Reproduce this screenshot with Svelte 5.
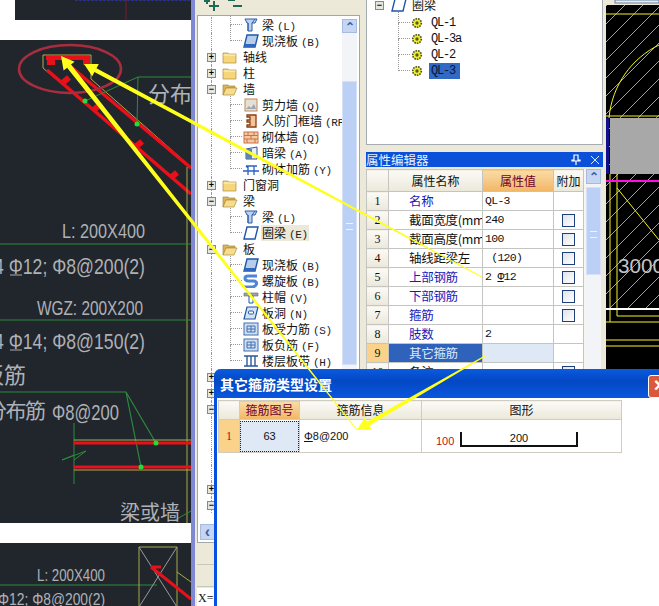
<script lang="ts">
  type Node = { name?: string; key?: string; icon?: string; level: number; exp?: string; sel?: boolean };

  const tree: Node[] = [
    { name: '梁', key: '(L)', icon: 'beam', level: 2 },
    { name: '现浇板', key: '(B)', icon: 'slab', level: 2 },
    { name: '轴线', icon: 'folder', level: 1, exp: '+' },
    { name: '柱', icon: 'folder', level: 1, exp: '+' },
    { name: '墙', icon: 'open', level: 1, exp: '-' },
    { name: '剪力墙', key: '(Q)', icon: 'shear', level: 2 },
    { name: '人防门框墙', key: '(RF)', icon: 'door', level: 2 },
    { name: '砌体墙', key: '(Q)', icon: 'brick', level: 2 },
    { name: '暗梁', key: '(A)', icon: 'hidden', level: 2 },
    { name: '砌体加筋', key: '(Y)', icon: 'rebar', level: 2 },
    { name: '门窗洞', icon: 'folder', level: 1, exp: '+' },
    { name: '梁', icon: 'open', level: 1, exp: '-' },
    { name: '梁', key: '(L)', icon: 'beam', level: 2 },
    { name: '圈梁', key: '(E)', icon: 'ring', level: 2, sel: true },
    { name: '板', icon: 'open', level: 1, exp: '-' },
    { name: '现浇板', key: '(B)', icon: 'slab', level: 2 },
    { name: '螺旋板', key: '(B)', icon: 'spiral', level: 2 },
    { name: '柱帽', key: '(V)', icon: 'cap', level: 2 },
    { name: '板洞', key: '(N)', icon: 'hole', level: 2 },
    { name: '板受力筋', key: '(S)', icon: 'grid', level: 2 },
    { name: '板负筋', key: '(F)', icon: 'grid', level: 2 },
    { name: '楼层板带', key: '(H)', icon: 'band', level: 2 },
    { level: 1, exp: '+' },
    { level: 1, exp: '+' },
    { level: 1, exp: '-' },
    { level: 2 }, { level: 2 }, { level: 2 }, { level: 2 },
    { level: 1, exp: '+' },
    { level: 1, exp: '-' }
  ];

  const members = ['QL-1', 'QL-3a', 'QL-2', 'QL-3'];

  const props = [
    { name: '名称', val: 'QL-3', blue: true },
    { name: '截面宽度(mm', val: '240', box: true },
    { name: '截面高度(mm', val: '100', box: true },
    { name: '轴线距梁左', val: ' (120)', box: true },
    { name: '上部钢筋', val: '2 ', bar: '12', blue: true, box: true },
    { name: '下部钢筋', val: '', blue: true, box: true },
    { name: '箍筋', val: '', blue: true, box: true },
    { name: '肢数', val: '2', blue: true },
    { name: '其它箍筋', val: '', active: true },
    { name: '备注', val: '', box: true }
  ];

  // tapered arrow: wide at the head, thin at the tail
  function arrow(x1: number, y1: number, x2: number, y2: number, w1: number, w2: number) {
    const len = Math.hypot(x2 - x1, y2 - y1);
    const ux = (x2 - x1) / len, uy = (y2 - y1) / len;
    const nx = -uy, ny = ux;
    const hx = x1 + ux * 13, hy = y1 + uy * 13;
    const pts = [
      [x1, y1],
      [hx + nx * 7, hy + ny * 7],
      [hx + nx * w1 / 2, hy + ny * w1 / 2],
      [x2 + nx * w2 / 2, y2 + ny * w2 / 2],
      [x2 - nx * w2 / 2, y2 - ny * w2 / 2],
      [hx - nx * w1 / 2, hy - ny * w1 / 2],
      [hx - nx * 7, hy - ny * 7]
    ];
    return pts.map((p) => p.map((n) => n.toFixed(1)).join(',')).join(' ');
  }

  const arrows = [
    arrow(61, 56, 357, 430, 5, 1),
    arrow(84, 64, 482, 277, 4.5, 1),
    arrow(357, 430, 485, 356, 4.5, 1)
  ];
</script>

{#snippet icon(kind: string)}
  <svg class="ico" viewBox="0 0 16 14" width="16" height="14">
    {#if kind === 'folder'}
      <path d="M1 3h5l1 1h7v9H1z" fill="#f6d67a" stroke="#a98a3c" stroke-width=".7" />
      <path d="M1.5 5h12" stroke="#fff3c4" />
    {:else if kind === 'open'}
      <path d="M1 3h5l1 1h6v2H4l-3 7z" fill="#d9b45c" stroke="#a98a3c" stroke-width=".7" />
      <path d="M4 6h11l-3 7H1z" fill="#f8dc8c" stroke="#a98a3c" stroke-width=".7" />
    {:else if kind === 'beam'}
      <path d="M2 1h12l-2 4H9v8H5V5H4z" fill="#bcd2ee" stroke="#2b5da8" />
      <path d="M9 5l3-4M5 5v8" stroke="#2b5da8" />
    {:else if kind === 'slab' || kind === 'ring'}
      <path d="M4 1h11l-3 12H1z" fill={kind === 'ring' ? '#fff' : '#b7cdeb'} stroke="#1f56a8" stroke-width="1.4" />
      {#if kind === 'slab'}<path d="M1 13h11l1-3H2z" fill="#2f68bd" />{/if}
    {:else if kind === 'shear'}
      <rect x="2" y="1" width="12" height="12" fill="#e6e0d4" stroke="#c08a5a" />
      <path d="M3 11l3-3 2 2 3-4 2 5z" fill="#9aa6b0" />
    {:else if kind === 'door'}
      <path d="M4 1h9v12H4v-2h3V8H4V6h3V3H4z" fill="#f3c496" stroke="#8a3d14" stroke-width="1.3" />
    {:else if kind === 'brick'}
      <rect x="1" y="2" width="14" height="11" fill="#f6c9a0" stroke="#c8734a" />
      <path d="M1 5.5h14M1 9h14M5 2v3.500M11 2v3.500M8 5.500V9M4 9v4M12 9v4" stroke="#c8734a" />
    {:else if kind === 'hidden'}
      <path d="M3 3l11-2v12H3z" fill="#e8eef6" stroke="#33558c" />
      <path d="M3 3h6v10H3z" fill="#5f85b8" />
    {:else if kind === 'rebar'}
      <path d="M0 9h16M3 4h11M5 4v9M11 4v9M3 4l2 2" stroke="#2a62c4" stroke-width="1.3" fill="none" />
    {:else if kind === 'spiral'}
      <path d="M14 2H5C1 2 1 6 5 7h6c4 1 3 5-1 6H1" fill="none" stroke="#4d86d6" stroke-width="3" />
    {:else if kind === 'cap'}
      <path d="M1 3h14v3H1z" fill="#9ca3aa" stroke="#666" stroke-width=".6" />
      <path d="M6 6h4v7H6z" fill="#fff" stroke="#1f56a8" />
    {:else if kind === 'hole'}
      <path d="M4 1h11l-3 12H1z" fill="#d5e2f3" stroke="#1f56a8" stroke-width="1.2" />
      <rect x="5.500" y="5" width="5" height="3" rx="1" fill="#fff" stroke="#1f56a8" />
    {:else if kind === 'grid'}
      <rect x="1" y="1" width="14" height="12" fill="#d3e0f1" stroke="#3d6fb5" />
      <path d="M4 4h8v6H4zM4 7h8M8 4v6" fill="none" stroke="#3d6fb5" />
    {:else if kind === 'band'}
      <path d="M1 2h14M1 12h14M4 2v10M8 2v10M12 2v10" stroke="#2c5a9a" stroke-width="1.4" />
    {/if}
  </svg>
{/snippet}

{#snippet gear()}
  <svg class="gear" viewBox="0 0 12 12" width="12" height="12">
    <circle cx="6" cy="6" r="4.300" fill="#f0ee30" stroke="#4a4a20" stroke-width="1.600" stroke-dasharray="1.600 1" />
    <circle cx="6" cy="6" r="1.700" fill="#5a5a30" />
  </svg>
{/snippet}

{#snippet expander(sign: string)}
  <span class="exp">{sign === '+' ? '+' : '−'}</span>
{/snippet}

<div class="screen">
  <section class="cad-left">
    <div class="sheet sheet-top">
      <svg viewBox="0 0 176 20" width="176" height="20">
        <path d="M60 0h116" stroke="#26309a" stroke-width="2" stroke-dasharray="3 1" />
        <path d="M111 0v20" stroke="#7a1c2c" />
      </svg>
    </div>
    <div class="sheet sheet-main">
      <svg viewBox="0 40 192 483" width="192" height="483">
        <g fill="none">
          <path d="M43 55h48v24l100 88M43 55v13l144 122" stroke="#b9a84a" />
          <path d="M47 70l144 124M70 66l121 102" stroke="#e8101a" stroke-width="3.500" />
          <path d="M46 58h44" stroke="#e8101a" stroke-width="4" />
          <path d="M85 101l53-24h53M138 77l-1 47" stroke="#2e8a3c" />
          <path d="M187 167v356" stroke="#a8a848" />
          <ellipse cx="70" cy="69" rx="51" ry="24" stroke="#a82e3e" stroke-width="2.500" />
          <path d="M0 244h191M0 320h191M0 392h126l30 51M126 392l15 75" stroke="#2e8a3c" stroke-width="1.200" />
          <path d="M74 423v61M74 455l-12 5 24-9-12 9" stroke="#2e8a3c" />
          <path d="M74 440h117M74 470h117" stroke="#b9a84a" />
          <path d="M74 443h117M74 467h117" stroke="#e8101a" stroke-width="3" />
          <path d="M175 520l16-9" stroke="#2e8a3c" />
          <!-- rebar grade bars under the first symbol of each line -->
          <path d="M10 275h12M10 350h12" stroke="#a9acb0" />
        </g>
        <g fill="#e8101a">
          <rect x="47" y="58" width="8" height="7" />
          <rect x="83" y="58" width="7" height="7" />
          <rect x="62" y="77" width="8" height="6" transform="rotate(-40 66 80)" />
          <rect x="92" y="105" width="8" height="6" transform="rotate(-40 96 108)" />
          <rect x="135" y="141" width="8" height="6" transform="rotate(-40 139 144)" />
          <rect x="170" y="172" width="8" height="6" transform="rotate(-40 174 175)" />
        </g>
        <g fill="#22dd33">
          <circle cx="85" cy="101" r="2.500" />
          <circle cx="137" cy="124" r="2.500" />
          <circle cx="156" cy="443" r="2.500" />
          <circle cx="141" cy="467" r="2.500" />
        </g>
        <g class="cad-text">
          <text x="148" y="102" font-size="22" textLength="44" lengthAdjust="spacingAndGlyphs">分布</text>
          <text x="62" y="238" font-size="21" textLength="83" lengthAdjust="spacingAndGlyphs">L: 200X400</text>
          <text x="-6" y="274" font-size="22" textLength="151" lengthAdjust="spacingAndGlyphs">4 Φ12; Φ8@200(2)</text>
          <text x="37" y="315" font-size="20" textLength="106" lengthAdjust="spacingAndGlyphs">WGZ: 200X200</text>
          <text x="-6" y="349" font-size="22" textLength="151" lengthAdjust="spacingAndGlyphs">4 Φ14; Φ8@150(2)</text>
          <text x="-18" y="383" font-size="22" textLength="44">板筋</text>
          <text x="-14" y="418" font-size="21" textLength="60">分布筋</text>
          <text x="52" y="420" font-size="22" textLength="67" lengthAdjust="spacingAndGlyphs">Φ8@200</text>
          <text x="120" y="520" font-size="20" textLength="60">梁或墙</text>
        </g>
      </svg>
    </div>
    <div class="sheet sheet-bottom">
      <svg viewBox="0 543 192 63" width="192" height="63">
        <path d="M0 585h157" stroke="#2e8a3c" stroke-width="1.200" />
        <path d="M139 547h38v60h-38zM177 572l14 10" fill="none" stroke="#a8a848" />
        <path d="M139 547l38 60M177 547l-38 60" stroke="#9a9a9a" />
        <path d="M151 567h10M151 567l40 32" stroke="#e8101a" stroke-width="3" fill="none" />
        <g class="cad-text">
          <text x="37" y="581" font-size="17" textLength="68" lengthAdjust="spacingAndGlyphs">L: 200X400</text>
          <text x="-2" y="605" font-size="17" textLength="107" lengthAdjust="spacingAndGlyphs">Φ12; Φ8@200(2)</text>
        </g>
      </svg>
    </div>
  </section>

  <div class="divider"></div>

  <section class="tree-col">
    <div class="toolbar">
      <svg viewBox="0 0 44 15" width="44" height="15">
        <path d="M6 -2v6M3 1h6M13 1v10M8 6h10" stroke="#1d6b54" stroke-width="2" />
        <path d="M27 0h7M32 6h9" stroke="#1d6b54" stroke-width="2" />
      </svg>
    </div>
    <div class="tree">
      {#each tree as n}
        <div class="row" class:child={n.level === 2}>
          {#if n.exp}{@render expander(n.exp)}{/if}
          {#if n.icon}{@render icon(n.icon)}{/if}
          {#if n.name}
            <span class="label" class:picked={n.sel}>{n.name}{#if n.key}<span class="key">{n.key}</span>{/if}</span>
          {/if}
        </div>
      {/each}
      <div class="vscroll">
        <span class="sbtn">⌃</span>
        <span class="thumb"><i></i></span>
      </div>
      <div class="hscroll"><span class="sbtn">‹</span></div>
    </div>
    <div class="tabs"><div></div><div></div></div>
    <div class="status">X=1</div>
  </section>

  <section class="props-col">
    <div class="members">
      <div class="row root">
        {@render expander('-')}
        {@render icon('ring')}
        <span class="label">圈梁</span>
      </div>
      {#each members as m, i}
        <div class="row member">
          {@render gear()}
          <span class="code" class:current={i === 3}>{m}</span>
        </div>
      {/each}
    </div>
    <header class="dock-title">
      <span>属性编辑器</span>
      <span class="dock-tools">
        <svg viewBox="0 0 10 12" width="10" height="12"><path d="M3 1h4v5h2v1H1V6h2zM5 7v4" fill="none" stroke="#fff" stroke-width="1.200" /></svg>
        <svg viewBox="0 0 10 10" width="10" height="10"><path d="M1 1l8 8M9 1l-8 8" stroke="#dfe8ff" /></svg>
      </span>
    </header>
    <div class="prop-wrap">
      <table class="grid">
        <thead>
          <tr><th class="no"></th><th class="n">属性名称</th><th class="v">属性值</th><th class="a">附加</th></tr>
        </thead>
        <tbody>
          {#each props as p, i}
            <tr>
              <td class="no" class:hot={p.active}>{i + 1}</td>
              <td class="n" class:blue={p.blue} class:active={p.active}>{p.name}</td>
              <td class="v" class:fill={p.active}>{p.val}{#if p.bar}<span class="rb">Φ</span>{p.bar}{/if}</td>
              <td class="a">{#if p.box}<span class="check"></span>{/if}</td>
            </tr>
          {/each}
        </tbody>
      </table>
      <div class="prop-scroll">
        <span class="sbtn">⌃</span>
        <span class="thumb"><i></i></span>
      </div>
    </div>
  </section>

  <section class="cad-right">
    <svg viewBox="606 0 53 606" width="53" height="606">
      <defs>
        <pattern id="hatch" width="18" height="18" patternUnits="userSpaceOnUse">
          <path d="M-2 20L20 -2" stroke="#c8c8c8" stroke-width=".8" />
        </pattern>
      </defs>
      <rect x="606" y="0" width="53" height="606" fill="#000" />
      <rect x="606" y="5" width="53" height="304" fill="url(#hatch)" />
      <rect x="606" y="0" width="53" height="5" fill="#ece9d8" />
      <rect x="615" y="0" width="44" height="3" fill="#e4ecf6" stroke="#6a7f9c" />
      <path d="M606 14h53M606 116h53M606 322h53M617 316h42M606 340h53M606 346h53" stroke="#f4f420" fill="none" />
      <path d="M609 118C612 85 632 58 659 45M610 174v148M617 174v142M617 188l42 52" stroke="#f4f420" fill="none" />
      <rect x="606" y="118" width="3" height="56" fill="#10108a" />
      <rect x="610" y="118" width="49" height="56" fill="#a8a8a8" />
      <path d="M606 181h53" stroke="#ff10e0" stroke-width="2" />
      <path d="M606 309h53" stroke="#fff" stroke-width="2" />
      <text class="big" x="618" y="273" font-size="21" textLength="46" lengthAdjust="spacingAndGlyphs">3000</text>
    </svg>
  </section>

  <div class="dialog">
    <header class="dlg-title">
      <span>其它箍筋类型设置</span>
      <span class="close">×</span>
    </header>
    <div class="dlg-body">
      <table class="stir">
        <thead>
          <tr><th class="c0"></th><th class="c1">箍筋图号</th><th class="c2">箍筋信息</th><th class="c3">图形</th></tr>
        </thead>
        <tbody>
          <tr>
            <td class="c0">1</td>
            <td class="c1"><span class="focus">63</span></td>
            <td class="c2"><span class="rb">Φ</span>8@200</td>
            <td class="c3">
              <div class="shape">
                <span class="dim">100</span>
                <span class="hook">200</span>
              </div>
            </td>
          </tr>
        </tbody>
      </table>
    </div>
  </div>

  <svg class="arrows" viewBox="0 0 659 606" width="659" height="606">
    {#each arrows as points}
      <polygon {points} fill="#ffff1e" />
    {/each}
  </svg>
</div>

<style>
  :global(body) { margin: 0; background: #fff; }
  .screen {
    position: relative;
    display: flex;
    width: 659px;
    height: 606px;
    overflow: hidden;
    background: #ece9d8;
    font: 12px "Noto Sans CJK SC", sans-serif;
    color: #111;
  }

  /* left CAD sheets */
  .cad-left {
    width: 191px;
    flex: none;
    background: #fff;
    overflow: hidden;
    position: relative;
  }
  .sheet { background: #21262d; overflow: hidden; }
  .sheet svg { display: block; }
  .sheet-top { height: 20px; margin-left: 15px; margin-bottom: 20px; }
  .sheet-main { height: 483px; margin-bottom: 20px; }
  .sheet-bottom { height: 63px; }
  .cad-text text { fill: #aeb1b5; font-family: "Liberation Sans", "Noto Sans CJK SC", sans-serif; }
  .divider { width: 4px; flex: none; background: #7f88d2; }

  /* element tree */
  .tree-col {
    width: 165px;
    flex: none;
    display: flex;
    flex-direction: column;
    padding-left: 2px;
    box-sizing: border-box;
    background: #ece9d8;
  }
  .toolbar { height: 15px; overflow: hidden; padding-left: 4px; }
  .toolbar svg { display: block; overflow: hidden; }
  .tree {
    position: relative;
    isolation: isolate;
    height: 528px;
    background: #fff;
    border: 1px solid #a0a8a8;
    box-sizing: border-box;
    padding-top: 1px;
    overflow: hidden;
  }
  .row { display: flex; align-items: center; height: 16px; white-space: nowrap; padding-left: 24px; position: relative; }
  .tree .row::after {
    content: "";
    position: absolute;
    left: 13px;
    top: 0;
    height: 16px;
    border-left: 1px dotted #999;
  }
  .row.child { padding-left: 45px; }
  .row.child::before {
    content: "";
    position: absolute;
    left: 32px;
    top: -8px;
    width: 12px;
    height: 16px;
    border-left: 1px dotted #999;
    border-bottom: 1px dotted #999;
    box-sizing: border-box;
  }
  .ico { flex: none; display: block; position: relative; z-index: 1; }
  .label { margin-left: 4px; line-height: 16px; padding: 0 1px; }
  .row.child .label { margin-left: 2px; }
  .label.picked { background: #ece9d8; }
  .key { font: 11px "Liberation Mono", monospace; margin-left: 3px; letter-spacing: -.4px; color: #222; }
  .exp {
    position: absolute;
    z-index: 1;
    left: 9px;
    top: 4px;
    width: 7px;
    height: 7px;
    border: 1px solid #888;
    background: #e6e6e0;
    font: bold 9px/7px "Liberation Sans", sans-serif;
    text-align: center;
    color: #000;
  }
  .vscroll {
    position: absolute;
    z-index: 2;
    right: 2px;
    top: 3px;
    bottom: 17px;
    width: 15px;
    background: #f3f4f7;
  }
  .sbtn {
    display: block;
    height: 14px;
    background: #c5d5f2;
    border: 1px solid #a7bbe0;
    box-sizing: border-box;
    color: #3b5fa8;
    font: bold 12px/14px "Liberation Sans", sans-serif;
    text-align: center;
  }
  .thumb {
    display: block;
    margin-top: 48px;
    height: 284px;
    background: #bcd0f5;
    border: 1px solid #d5e1f8;
    box-sizing: border-box;
    position: relative;
  }
  .thumb i {
    position: absolute;
    left: 3px;
    right: 3px;
    top: 50%;
    height: 5px;
    border-top: 1px solid #eef3ff;
    border-bottom: 1px solid #eef3ff;
  }
  .hscroll {
    position: absolute;
    z-index: 2;
    left: 2px;
    right: 2px;
    bottom: 2px;
    height: 16px;
    background: #f3f4f7;
  }
  .hscroll .sbtn { width: 15px; height: 16px; line-height: 14px; font-size: 16px; }
  .tabs { height: 45px; }
  .tabs div { height: 21px; border-bottom: 1px solid #c8c8b8; }
  .status {
    height: 18px;
    background: #fff;
    font: 12px/20px "Liberation Serif", serif;
    padding-left: 1px;
  }

  /* right side: member list and property editor */
  .props-col {
    width: 246px;
    flex: none;
    box-sizing: border-box;
    padding: 0 3px 0 6px;
    background: #ece9d8;
  }
  .members {
    height: 145px;
    background: #fff;
    border: 1px solid #a5acb4;
    border-top: 0;
    box-sizing: border-box;
    margin-bottom: 7px;
    position: relative;
    isolation: isolate;
  }
  .row.root { top: -3px; padding-left: 24px; }
  .root .exp { left: 8px; }
  .row.member { top: -1px; padding-left: 44px; }
  .row.member::before {
    content: "";
    position: absolute;
    left: 31px;
    top: -8px;
    height: 16px;
    width: 12px;
    border-left: 1px dotted #999;
    border-bottom: 1px dotted #999;
    box-sizing: border-box;
  }
  .gear { flex: none; position: relative; }
  .code {
    font: 12px/16px "Liberation Mono", monospace;
    letter-spacing: -1.200px;
    margin-left: 6px;
    padding: 0 2px;
  }
  .code.current { background: #316ac5; color: #0a1436; width: 27px; }
  .dock-title {
    height: 15px;
    background: #0a50d8;
    color: #e8f0ff;
    font-size: 12.500px;
    line-height: 15px;
    display: flex;
    justify-content: space-between;
    width: 237px;
  }
  .dock-tools { display: flex; align-items: center; gap: 9px; padding-right: 3px; }
  .prop-wrap {
    display: flex;
    align-items: flex-start;
    margin-top: 2px;
    background: #f6f5ef;
    width: 235px;
    height: 300px;
    overflow: hidden;
  }
  .grid { border-collapse: collapse; table-layout: fixed; width: 218px; background: #fff; flex: none; }
  .grid th, .grid td {
    box-sizing: border-box;
    padding: 0;
    border: 1px solid #c4c4c0;
    height: 19px;
    line-height: 14px;
    font-weight: 400;
    overflow: hidden;
    white-space: nowrap;
  }
  .grid th {
    height: 22px;
    background: linear-gradient(#fbfaf6, #ebe8da);
    text-align: center;
  }
  .grid .no { width: 22px; background: linear-gradient(#fbfaf6, #ebe8da); text-align: center; font: 12px/14px "Liberation Serif", serif; }
  .grid .n { width: 94px; }
  .grid .v { width: 71px; }
  .grid th.v { background: linear-gradient(#f9dca8, #f2b664); color: #700028; }
  .grid td.n { padding-left: 20px; font-size: 12.500px; letter-spacing: -.3px; }
  .grid td.blue { color: #1a1ab8; }
  .grid td.active { background: #2f63bb; color: #dfe8f8; }
  .grid td.no.hot { background: #fbd289; }
  .grid td.v { font: 11.500px/14px "Liberation Mono", monospace; letter-spacing: -.7px; padding-left: 2px; white-space: pre; }
  .grid td.fill { background: #dfe8f5; }
  .grid td.a { text-align: center; }
  .rb { text-decoration: underline; }
  .check {
    display: block;
    width: 11px;
    height: 11px;
    margin: 0 auto;
    border: 1px solid #1e3f7a;
    background: linear-gradient(135deg, #dfe3e8, #fff);
  }
  .prop-scroll { width: 15px; height: 300px; margin-left: 2px; background: #f3f4f7; }
  .prop-scroll .sbtn { height: 15px; }
  .prop-scroll .thumb { margin-top: 3px; height: 88px; }

  .cad-right { width: 53px; flex: none; }
  .cad-right svg { display: block; }
  .big { fill: #c4c4c4; font-family: "Liberation Sans", sans-serif; }

  /* floating dialog */
  .dialog {
    position: absolute;
    z-index: 5;
    left: 214px;
    top: 369px;
    width: 470px;
    height: 260px;
    display: flex;
    flex-direction: column;
    border: 3px solid #0850e0;
    border-top: 0;
    border-radius: 7px 7px 0 0;
    box-sizing: border-box;
    background: #fff;
  }
  .dlg-title {
    flex: none;
    height: 29px;
    margin: 0 -3px;
    padding-left: 6px;
    border-radius: 7px 7px 0 0;
    background: linear-gradient(#0a5be0, #0348c4 40%, #0a56dc);
    color: #fff;
    font-size: 14px;
    font-weight: 700;
    line-height: 30px;
    position: relative;
  }
  .close {
    position: absolute;
    left: 434px;
    top: 6px;
    width: 21px;
    height: 21px;
    border: 1px solid #fff;
    border-radius: 3px;
    background: #d9593a;
    color: #fff;
    font: bold 20px/19px "Liberation Sans", sans-serif;
    text-align: center;
  }
  .dlg-body { flex: 1; padding: 2px 0 0 1px; }
  .stir { border-collapse: collapse; table-layout: fixed; width: 404px; }
  .stir th, .stir td { box-sizing: border-box; padding: 0; border: 1px solid #d0cdc0; font-weight: 400; text-align: center; line-height: 14px; }
  .stir th { height: 19px; background: linear-gradient(#fbfaf6, #ebe8da); }
  .stir td { height: 33px; }
  .stir .c0 { width: 21px; }
  .stir .c1 { width: 60px; }
  .stir .c2 { width: 122px; }
  .stir th.c1 { background: linear-gradient(#f9dca8, #f2b664); color: #700028; }
  .stir td.c0 { background: #fbd289; color: #a01020; font: 12px "Liberation Serif", serif; }
  .stir td.c1 { padding: 0; }
  .focus {
    display: block;
    height: 31px;
    background: #dfe8f5;
    border: 1px dotted #222;
    box-sizing: border-box;
    font: 11px/29px "Liberation Sans", sans-serif;
  }
  .stir td.c2 { text-align: left; padding-left: 4px; font: 11px "Liberation Sans", sans-serif; }
  .shape { display: flex; align-items: flex-end; padding-left: 14px; height: 22px; font: 11px/12px "Liberation Sans", sans-serif; }
  .dim { color: #c01020; width: 24px; text-align: left; }
  .hook {
    width: 118px;
    height: 15px;
    line-height: 12px;
    border: 2px solid #111;
    border-top: 0;
    box-sizing: border-box;
  }

  .arrows { position: absolute; z-index: 6; left: 0; top: 0; pointer-events: none; }
</style>
